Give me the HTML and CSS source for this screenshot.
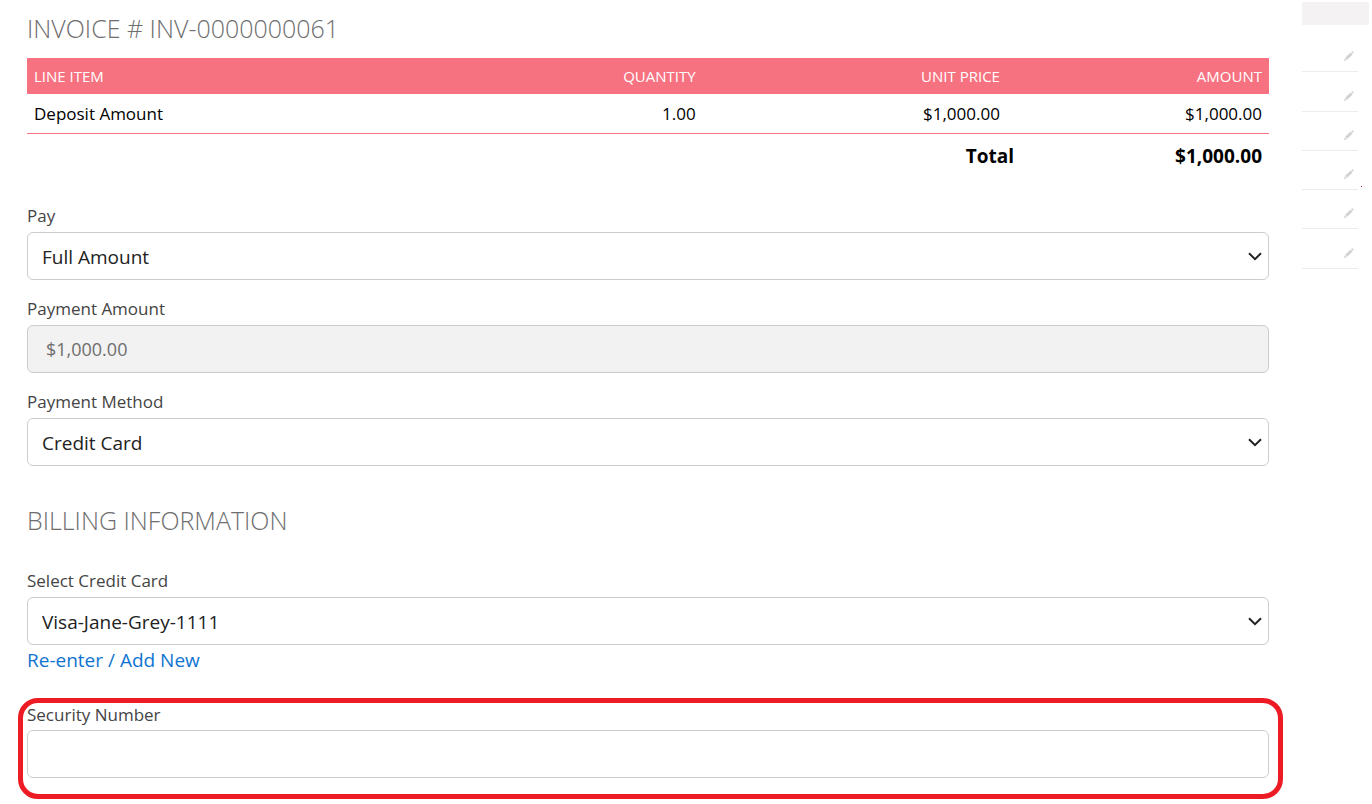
FILE: index.html
```html
<!DOCTYPE html>
<html lang="en">
<head>
    <meta charset="utf-8">
    <meta name="viewport" content="width=device-width,initial-scale=1.0">
    <title>Invoice # INV-0000000061</title>
    <link rel="stylesheet" href="styles.css">
</head>
<body>
    <svg width="0" height="0" class="defs">
        <symbol id="chevron" viewBox="0 0 14 9"><path d="M1 1.2 L7 7.2 L13 1.2" fill="none" stroke="#222" stroke-width="2"/></symbol>
        <symbol id="pencil" viewBox="0 0 10 10"><path d="M0 10 L.8 7.2 L2.8 9.2 Z M1.2 6.8 L6.6 1.4 L8.6 3.4 L3.2 8.8 Z M7.2 .9 L8.2 0 L10 1.8 L9.1 2.8 Z"/></symbol>
    </svg>
    <div class="page">
        <main>
            <h2>INVOICE # INV-0000000061</h2>
            <table class="items">
                <thead>
                    <tr><th class="item">LINE ITEM</th><th class="qty">QUANTITY</th><th class="price">UNIT PRICE</th><th>AMOUNT</th></tr>
                </thead>
                <tbody>
                    <tr><td class="item">Deposit Amount</td><td>1.00</td><td>$1,000.00</td><td>$1,000.00</td></tr>
                </tbody>
            </table>
            <dl class="total"><dt>Total</dt><dd>$1,000.00</dd></dl>

            <form>
                <div class="field">
                    <label for="pay">Pay</label>
                    <div class="select">
                        <select id="pay"><option>Full Amount</option></select>
                        <svg><use href="#chevron"/></svg>
                    </div>
                </div>
                <div class="field">
                    <label for="amount">Payment Amount</label>
                    <input id="amount" type="text" value="$1,000.00" disabled>
                </div>
                <div class="field">
                    <label for="method">Payment Method</label>
                    <div class="select">
                        <select id="method"><option>Credit Card</option></select>
                        <svg><use href="#chevron"/></svg>
                    </div>
                </div>

                <h2 class="billing">BILLING INFORMATION</h2>
                <div class="field">
                    <label for="card">Select Credit Card</label>
                    <div class="select">
                        <select id="card"><option>Visa-Jane-Grey-1111</option></select>
                        <svg><use href="#chevron"/></svg>
                    </div>
                    <a href="#">Re-enter / Add New</a>
                </div>
                <div class="field highlight">
                    <label for="security">Security Number</label>
                    <input id="security" type="text">
                </div>
            </form>
        </main>
        <aside>
            <div class="bar"></div>
            <ul>
                <li><button type="button" aria-label="Edit"><svg><use href="#pencil"/></svg></button></li>
                <li><button type="button" aria-label="Edit"><svg><use href="#pencil"/></svg></button></li>
                <li><button type="button" aria-label="Edit"><svg><use href="#pencil"/></svg></button></li>
                <li class="marked"><button type="button" aria-label="Edit"><svg><use href="#pencil"/></svg></button></li>
                <li><button type="button" aria-label="Edit"><svg><use href="#pencil"/></svg></button></li>
                <li><button type="button" aria-label="Edit"><svg><use href="#pencil"/></svg></button></li>
            </ul>
        </aside>
    </div>
</body>
</html>
```
FILE: styles.css
```css
* { box-sizing: border-box; }
body {margin:0; background:white; color:#000; font-family:"Segoe UI", "Open Sans", sans-serif; font-size:17px; line-height:24px;}
.defs {display:block;}
.page {display:grid; grid-template-columns:minmax(0, 1fr) 67px; column-gap:33px; padding:0 3px 0 27px;}
h2 {margin:0; padding:7px 0 9px; font-size:25px; line-height:42px; font-weight:300; color:#6e6e6e;}

/* line items */
.items {width:100%; border-collapse:collapse; table-layout:fixed;}
.items th, .items td {padding:0 7px; text-align:right;}
.items th {height:36px; background:#f77280; color:white; font-size:15px; font-weight:400;}
.items td {height:39px; padding-top:2px; border-bottom:1px solid #f77280;}
.items .item {width:30%; text-align:left;}
.items .qty {width:24.4%;}
.items .price {width:24.5%;}
.total {display:flex; justify-content:flex-end; margin:0 0 30px; padding:10px 7px 6px; font-size:19px; font-weight:700;}
.total dd {width:248px; margin:0; text-align:right;}

/* form */
.field {display:flex; flex-direction:column; margin-bottom:17px;}
label {padding-bottom:4px; color:#444;}
input, select {width:100%; height:48px; border:1px solid #ccc; border-radius:6px; background:white; color:#222; font-family:inherit; font-size:19px;}
input {padding:0 18px; font-size:18px;}
input:disabled {background:#f2f2f2; color:#6e6e6e;}
.select {display:grid; align-items:center;}
.select select, .select svg {grid-area:1 / 1;}
select {appearance:none; padding:2px 36px 0 14px;}
.select svg {justify-self:end; width:14px; height:9px; margin:2px 7px 0 0; pointer-events:none;}
.billing {padding:16px 0 28px;}
a {align-self:flex-start; padding:3px 0; font-size:19px; color:#0f74d1; text-decoration:none;}
.highlight {margin:23px -14px 0 -9px; padding:0 9px 16px 4px; border:5px solid #ed1c24; border-radius:20px;}
.highlight label {padding-bottom:3px;}

/* side list */
aside {padding-top:2px;}
.bar {height:23px; background:#f4f2f3;}
ul {width:56px; margin:0; padding:8px 0 0; list-style:none;}
li {display:flex; justify-content:flex-end; align-items:center; height:39px; padding:8px 4px 0 0; border-bottom:1px solid #ececec;}
li:nth-child(4n+2) {height:40px;}
li button {display:flex; padding:0; border:0; background:none;}
li svg {width:10px; height:10px; fill:#d2d0d1;}
.marked {position:relative;}
.marked::after {content:""; position:absolute; right:-4px; bottom:2px; width:1px; height:1px; background:#c1272d;}
```
